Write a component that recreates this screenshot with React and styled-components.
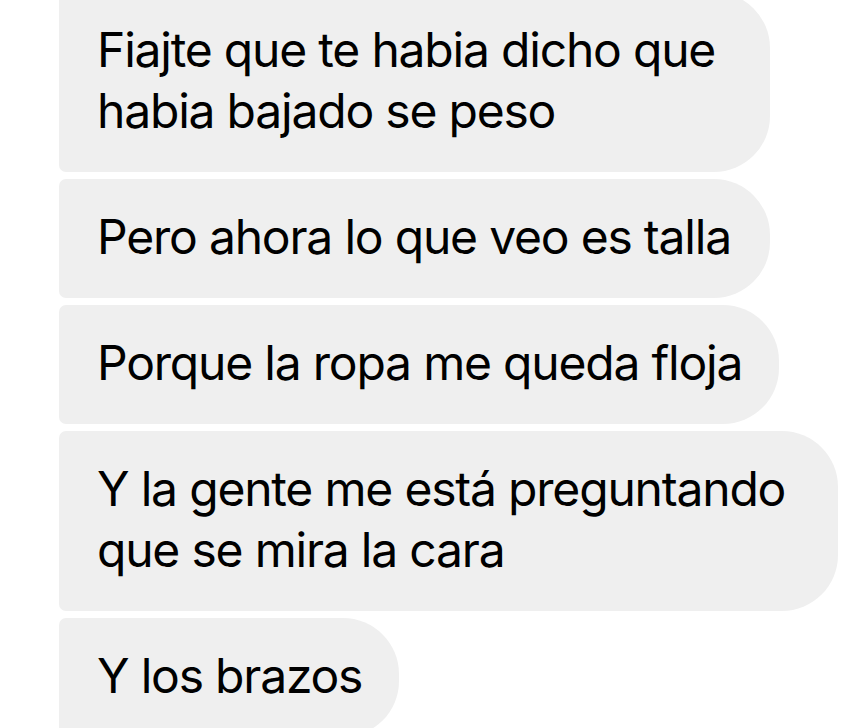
import React from "react";
import styled, { createGlobalStyle } from "styled-components";

const Global = createGlobalStyle`
  html, body { margin: 0; padding: 0; background: #ffffff; }
  body { font-family: Inter, "Liberation Sans", sans-serif; overflow: hidden; }
`;

const Thread = styled.div`
  display: flex;
  flex-direction: column;
  align-items: flex-start;
  gap: 7px;
  padding-left: 59px;
  margin-top: -8.5px;
`;

const Bubble = styled.div`
  box-sizing: border-box;
  width: ${(p) => p.$width}px;
  background: #efefef;
  border-radius: 7px 56px 56px 7px;
  padding: 27px 20px 31px 38px;
  color: #000;
  font-size: 48px;
  line-height: 61px;
  letter-spacing: -1.2px;
  white-space: nowrap;
`;

const messages = [
  { w: 711, lines: ["Fiajte que te habia dicho que", "habia bajado se peso"] },
  { w: 711, lines: ["Pero ahora lo que veo es talla"] },
  { w: 720, lines: ["Porque la ropa me queda floja"] },
  { w: 779, lines: ["Y la gente me está preguntando", "que se mira la cara"] },
  { w: 340, lines: ["Y los brazos"] },
];

export default function App() {
  return (
    <>
      <Global />
      <Thread>
        {messages.map((m, i) => (
          <Bubble key={i} $width={m.w}>
            {m.lines.map((l, j) => (
              <div key={j}>{l}</div>
            ))}
          </Bubble>
        ))}
      </Thread>
    </>
  );
}
